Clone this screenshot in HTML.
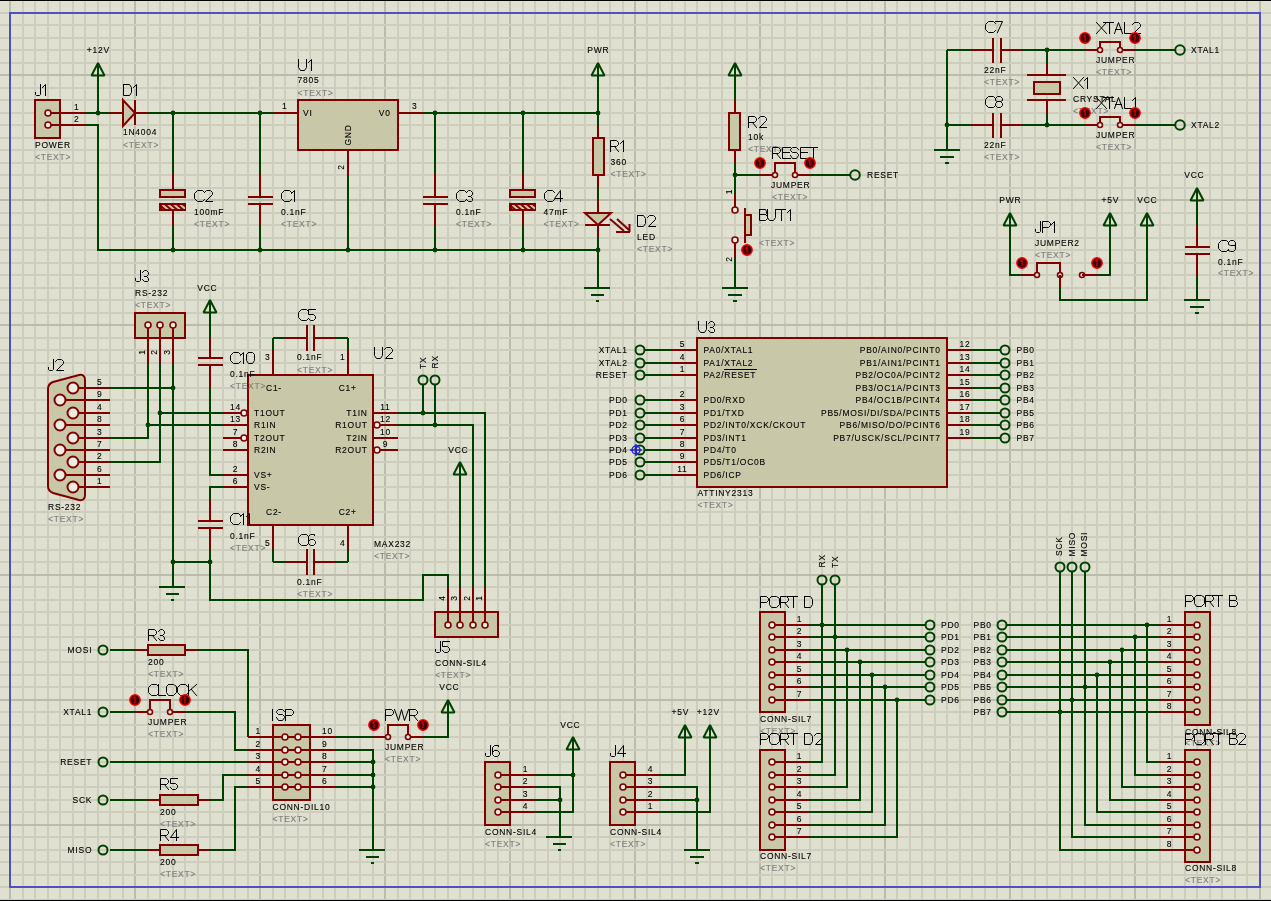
<!DOCTYPE html>
<html><head><meta charset="utf-8"><style>
html,body{margin:0;padding:0;background:#E0E0D0;overflow:hidden}
svg{display:block;will-change:transform}
.w{fill:none;stroke:#004000;stroke-width:2;stroke-linecap:butt;stroke-linejoin:miter;shape-rendering:crispEdges}
.r{fill:none;stroke:#800000;stroke-width:2;stroke-linecap:butt;stroke-linejoin:miter;shape-rendering:crispEdges}
.b{stroke:#800000;stroke-width:2;shape-rendering:crispEdges}
.j{fill:#004000}
.pw{fill:none;stroke:#004000;stroke-width:2;stroke-linejoin:bevel}
.t{fill:none;stroke:#004000;stroke-width:2}
.pc{fill:#ECECE2;stroke:#800000;stroke-width:1.6}
.ed{fill:#380000;stroke:#ff0000;stroke-width:1.4}
.edm{fill:none;stroke:#e00000;stroke-width:1.2}
text{font-family:"Liberation Sans",sans-serif}
.s,.g,.pn{letter-spacing:0.85px}
.big{font-size:16px;fill:#000}
.s{font-size:9.6px;fill:#000;stroke:#000;stroke-width:0.12}
.g{font-size:9.6px;fill:#808080;stroke:#808080;stroke-width:0.15}
.pn{font-size:9.6px;fill:#000;stroke:#000;stroke-width:0.12}
</style></head>
<body><svg width="1271" height="901" viewBox="0 0 1271 901">
<rect x="0" y="0" width="1271" height="901" fill="#E0E0D0"/>
<g stroke-width="1"><rect x="9" y="0" width="2" height="901" fill="#BCBCAD"/>
<rect x="22" y="0" width="2" height="901" fill="#CDCDBE"/>
<rect x="34" y="0" width="2" height="901" fill="#CDCDBE"/>
<rect x="47" y="0" width="2" height="901" fill="#CDCDBE"/>
<rect x="59" y="0" width="2" height="901" fill="#CDCDBE"/>
<rect x="72" y="0" width="2" height="901" fill="#CDCDBE"/>
<rect x="84" y="0" width="2" height="901" fill="#CDCDBE"/>
<rect x="97" y="0" width="2" height="901" fill="#CDCDBE"/>
<rect x="109" y="0" width="2" height="901" fill="#CDCDBE"/>
<rect x="122" y="0" width="2" height="901" fill="#CDCDBE"/>
<rect x="134" y="0" width="2" height="901" fill="#BCBCAD"/>
<rect x="147" y="0" width="2" height="901" fill="#CDCDBE"/>
<rect x="159" y="0" width="2" height="901" fill="#CDCDBE"/>
<rect x="172" y="0" width="2" height="901" fill="#CDCDBE"/>
<rect x="184" y="0" width="2" height="901" fill="#CDCDBE"/>
<rect x="197" y="0" width="2" height="901" fill="#CDCDBE"/>
<rect x="209" y="0" width="2" height="901" fill="#CDCDBE"/>
<rect x="222" y="0" width="2" height="901" fill="#CDCDBE"/>
<rect x="234" y="0" width="2" height="901" fill="#CDCDBE"/>
<rect x="247" y="0" width="2" height="901" fill="#CDCDBE"/>
<rect x="259" y="0" width="2" height="901" fill="#BCBCAD"/>
<rect x="272" y="0" width="2" height="901" fill="#CDCDBE"/>
<rect x="284" y="0" width="2" height="901" fill="#CDCDBE"/>
<rect x="297" y="0" width="2" height="901" fill="#CDCDBE"/>
<rect x="309" y="0" width="2" height="901" fill="#CDCDBE"/>
<rect x="322" y="0" width="2" height="901" fill="#CDCDBE"/>
<rect x="334" y="0" width="2" height="901" fill="#CDCDBE"/>
<rect x="347" y="0" width="2" height="901" fill="#CDCDBE"/>
<rect x="359" y="0" width="2" height="901" fill="#CDCDBE"/>
<rect x="372" y="0" width="2" height="901" fill="#CDCDBE"/>
<rect x="384" y="0" width="2" height="901" fill="#BCBCAD"/>
<rect x="397" y="0" width="2" height="901" fill="#CDCDBE"/>
<rect x="409" y="0" width="2" height="901" fill="#CDCDBE"/>
<rect x="422" y="0" width="2" height="901" fill="#CDCDBE"/>
<rect x="434" y="0" width="2" height="901" fill="#CDCDBE"/>
<rect x="447" y="0" width="2" height="901" fill="#CDCDBE"/>
<rect x="459" y="0" width="2" height="901" fill="#CDCDBE"/>
<rect x="472" y="0" width="2" height="901" fill="#CDCDBE"/>
<rect x="484" y="0" width="2" height="901" fill="#CDCDBE"/>
<rect x="497" y="0" width="2" height="901" fill="#CDCDBE"/>
<rect x="509" y="0" width="2" height="901" fill="#BCBCAD"/>
<rect x="522" y="0" width="2" height="901" fill="#CDCDBE"/>
<rect x="534" y="0" width="2" height="901" fill="#CDCDBE"/>
<rect x="547" y="0" width="2" height="901" fill="#CDCDBE"/>
<rect x="559" y="0" width="2" height="901" fill="#CDCDBE"/>
<rect x="572" y="0" width="2" height="901" fill="#CDCDBE"/>
<rect x="584" y="0" width="2" height="901" fill="#CDCDBE"/>
<rect x="597" y="0" width="2" height="901" fill="#CDCDBE"/>
<rect x="609" y="0" width="2" height="901" fill="#CDCDBE"/>
<rect x="622" y="0" width="2" height="901" fill="#CDCDBE"/>
<rect x="634" y="0" width="2" height="901" fill="#BCBCAD"/>
<rect x="646" y="0" width="2" height="901" fill="#CDCDBE"/>
<rect x="659" y="0" width="2" height="901" fill="#CDCDBE"/>
<rect x="671" y="0" width="2" height="901" fill="#CDCDBE"/>
<rect x="684" y="0" width="2" height="901" fill="#CDCDBE"/>
<rect x="696" y="0" width="2" height="901" fill="#CDCDBE"/>
<rect x="709" y="0" width="2" height="901" fill="#CDCDBE"/>
<rect x="721" y="0" width="2" height="901" fill="#CDCDBE"/>
<rect x="734" y="0" width="2" height="901" fill="#CDCDBE"/>
<rect x="746" y="0" width="2" height="901" fill="#CDCDBE"/>
<rect x="759" y="0" width="2" height="901" fill="#BCBCAD"/>
<rect x="771" y="0" width="2" height="901" fill="#CDCDBE"/>
<rect x="784" y="0" width="2" height="901" fill="#CDCDBE"/>
<rect x="796" y="0" width="2" height="901" fill="#CDCDBE"/>
<rect x="809" y="0" width="2" height="901" fill="#CDCDBE"/>
<rect x="821" y="0" width="2" height="901" fill="#CDCDBE"/>
<rect x="834" y="0" width="2" height="901" fill="#CDCDBE"/>
<rect x="846" y="0" width="2" height="901" fill="#CDCDBE"/>
<rect x="859" y="0" width="2" height="901" fill="#CDCDBE"/>
<rect x="871" y="0" width="2" height="901" fill="#CDCDBE"/>
<rect x="884" y="0" width="2" height="901" fill="#BCBCAD"/>
<rect x="896" y="0" width="2" height="901" fill="#CDCDBE"/>
<rect x="909" y="0" width="2" height="901" fill="#CDCDBE"/>
<rect x="921" y="0" width="2" height="901" fill="#CDCDBE"/>
<rect x="934" y="0" width="2" height="901" fill="#CDCDBE"/>
<rect x="946" y="0" width="2" height="901" fill="#CDCDBE"/>
<rect x="959" y="0" width="2" height="901" fill="#CDCDBE"/>
<rect x="971" y="0" width="2" height="901" fill="#CDCDBE"/>
<rect x="984" y="0" width="2" height="901" fill="#CDCDBE"/>
<rect x="996" y="0" width="2" height="901" fill="#CDCDBE"/>
<rect x="1009" y="0" width="2" height="901" fill="#BCBCAD"/>
<rect x="1021" y="0" width="2" height="901" fill="#CDCDBE"/>
<rect x="1034" y="0" width="2" height="901" fill="#CDCDBE"/>
<rect x="1046" y="0" width="2" height="901" fill="#CDCDBE"/>
<rect x="1059" y="0" width="2" height="901" fill="#CDCDBE"/>
<rect x="1071" y="0" width="2" height="901" fill="#CDCDBE"/>
<rect x="1084" y="0" width="2" height="901" fill="#CDCDBE"/>
<rect x="1096" y="0" width="2" height="901" fill="#CDCDBE"/>
<rect x="1109" y="0" width="2" height="901" fill="#CDCDBE"/>
<rect x="1121" y="0" width="2" height="901" fill="#CDCDBE"/>
<rect x="1134" y="0" width="2" height="901" fill="#BCBCAD"/>
<rect x="1146" y="0" width="2" height="901" fill="#CDCDBE"/>
<rect x="1159" y="0" width="2" height="901" fill="#CDCDBE"/>
<rect x="1171" y="0" width="2" height="901" fill="#CDCDBE"/>
<rect x="1184" y="0" width="2" height="901" fill="#CDCDBE"/>
<rect x="1196" y="0" width="2" height="901" fill="#CDCDBE"/>
<rect x="1209" y="0" width="2" height="901" fill="#CDCDBE"/>
<rect x="1221" y="0" width="2" height="901" fill="#CDCDBE"/>
<rect x="1234" y="0" width="2" height="901" fill="#CDCDBE"/>
<rect x="1246" y="0" width="2" height="901" fill="#CDCDBE"/>
<rect x="1259" y="0" width="2" height="901" fill="#BCBCAD"/>
<rect x="0" y="-1" width="1271" height="2" fill="#CDCDBE"/>
<rect x="0" y="12" width="1271" height="2" fill="#CDCDBE"/>
<rect x="0" y="24" width="1271" height="2" fill="#CDCDBE"/>
<rect x="0" y="37" width="1271" height="2" fill="#CDCDBE"/>
<rect x="0" y="49" width="1271" height="2" fill="#CDCDBE"/>
<rect x="0" y="62" width="1271" height="2" fill="#CDCDBE"/>
<rect x="0" y="74" width="1271" height="2" fill="#BCBCAD"/>
<rect x="0" y="87" width="1271" height="2" fill="#CDCDBE"/>
<rect x="0" y="99" width="1271" height="2" fill="#CDCDBE"/>
<rect x="0" y="112" width="1271" height="2" fill="#CDCDBE"/>
<rect x="0" y="124" width="1271" height="2" fill="#CDCDBE"/>
<rect x="0" y="137" width="1271" height="2" fill="#CDCDBE"/>
<rect x="0" y="149" width="1271" height="2" fill="#CDCDBE"/>
<rect x="0" y="162" width="1271" height="2" fill="#CDCDBE"/>
<rect x="0" y="174" width="1271" height="2" fill="#CDCDBE"/>
<rect x="0" y="187" width="1271" height="2" fill="#CDCDBE"/>
<rect x="0" y="199" width="1271" height="2" fill="#BCBCAD"/>
<rect x="0" y="212" width="1271" height="2" fill="#CDCDBE"/>
<rect x="0" y="224" width="1271" height="2" fill="#CDCDBE"/>
<rect x="0" y="237" width="1271" height="2" fill="#CDCDBE"/>
<rect x="0" y="249" width="1271" height="2" fill="#CDCDBE"/>
<rect x="0" y="262" width="1271" height="2" fill="#CDCDBE"/>
<rect x="0" y="274" width="1271" height="2" fill="#CDCDBE"/>
<rect x="0" y="287" width="1271" height="2" fill="#CDCDBE"/>
<rect x="0" y="299" width="1271" height="2" fill="#CDCDBE"/>
<rect x="0" y="312" width="1271" height="2" fill="#CDCDBE"/>
<rect x="0" y="324" width="1271" height="2" fill="#BCBCAD"/>
<rect x="0" y="337" width="1271" height="2" fill="#CDCDBE"/>
<rect x="0" y="349" width="1271" height="2" fill="#CDCDBE"/>
<rect x="0" y="362" width="1271" height="2" fill="#CDCDBE"/>
<rect x="0" y="374" width="1271" height="2" fill="#CDCDBE"/>
<rect x="0" y="387" width="1271" height="2" fill="#CDCDBE"/>
<rect x="0" y="399" width="1271" height="2" fill="#CDCDBE"/>
<rect x="0" y="412" width="1271" height="2" fill="#CDCDBE"/>
<rect x="0" y="424" width="1271" height="2" fill="#CDCDBE"/>
<rect x="0" y="437" width="1271" height="2" fill="#CDCDBE"/>
<rect x="0" y="449" width="1271" height="2" fill="#BCBCAD"/>
<rect x="0" y="461" width="1271" height="2" fill="#CDCDBE"/>
<rect x="0" y="474" width="1271" height="2" fill="#CDCDBE"/>
<rect x="0" y="486" width="1271" height="2" fill="#CDCDBE"/>
<rect x="0" y="499" width="1271" height="2" fill="#CDCDBE"/>
<rect x="0" y="511" width="1271" height="2" fill="#CDCDBE"/>
<rect x="0" y="524" width="1271" height="2" fill="#CDCDBE"/>
<rect x="0" y="536" width="1271" height="2" fill="#CDCDBE"/>
<rect x="0" y="549" width="1271" height="2" fill="#CDCDBE"/>
<rect x="0" y="561" width="1271" height="2" fill="#CDCDBE"/>
<rect x="0" y="574" width="1271" height="2" fill="#BCBCAD"/>
<rect x="0" y="586" width="1271" height="2" fill="#CDCDBE"/>
<rect x="0" y="599" width="1271" height="2" fill="#CDCDBE"/>
<rect x="0" y="611" width="1271" height="2" fill="#CDCDBE"/>
<rect x="0" y="624" width="1271" height="2" fill="#CDCDBE"/>
<rect x="0" y="636" width="1271" height="2" fill="#CDCDBE"/>
<rect x="0" y="649" width="1271" height="2" fill="#CDCDBE"/>
<rect x="0" y="661" width="1271" height="2" fill="#CDCDBE"/>
<rect x="0" y="674" width="1271" height="2" fill="#CDCDBE"/>
<rect x="0" y="686" width="1271" height="2" fill="#CDCDBE"/>
<rect x="0" y="699" width="1271" height="2" fill="#BCBCAD"/>
<rect x="0" y="711" width="1271" height="2" fill="#CDCDBE"/>
<rect x="0" y="724" width="1271" height="2" fill="#CDCDBE"/>
<rect x="0" y="736" width="1271" height="2" fill="#CDCDBE"/>
<rect x="0" y="749" width="1271" height="2" fill="#CDCDBE"/>
<rect x="0" y="761" width="1271" height="2" fill="#CDCDBE"/>
<rect x="0" y="774" width="1271" height="2" fill="#CDCDBE"/>
<rect x="0" y="786" width="1271" height="2" fill="#CDCDBE"/>
<rect x="0" y="799" width="1271" height="2" fill="#CDCDBE"/>
<rect x="0" y="811" width="1271" height="2" fill="#CDCDBE"/>
<rect x="0" y="824" width="1271" height="2" fill="#BCBCAD"/>
<rect x="0" y="836" width="1271" height="2" fill="#CDCDBE"/>
<rect x="0" y="849" width="1271" height="2" fill="#CDCDBE"/>
<rect x="0" y="861" width="1271" height="2" fill="#CDCDBE"/>
<rect x="0" y="874" width="1271" height="2" fill="#CDCDBE"/>
<rect x="0" y="886" width="1271" height="2" fill="#CDCDBE"/>
<rect x="0" y="899" width="1271" height="2" fill="#CDCDBE"/></g>
<rect x="0" y="0" width="1271" height="1" fill="#000"/>
<rect x="0" y="900" width="1271" height="1" fill="#000"/>
<rect x="10" y="13" width="1250" height="874" fill="none" stroke="#5050C4" stroke-width="2" shape-rendering="crispEdges"/>
<rect x="35" y="100" width="25" height="38" class="b" fill="#C8C8A8"/>
<polyline points="48,113 85,113" class="r"/>
<polyline points="48,125 85,125" class="r"/>
<circle cx="48" cy="113" r="3" class="pc"/>
<circle cx="48" cy="125" r="3" class="pc"/>
<polygon points="98,63 91.5,75.5 104.5,75.5" class="pw"/>
<line x1="98" y1="63" x2="98" y2="76" class="w"/>
<polyline points="85,113 110,113" class="w"/>
<circle cx="98" cy="113" r="2.4" class="j"/>
<polyline points="85,125 98,125 98,250 598,250 598,288" class="w"/>
<path d="M584,288H610M591,295H604M596,301H599" class="w"/>
<polyline points="110,113 123,113" class="r"/>
<polyline points="135,113 148,113" class="r"/>
<polygon points="123,100 123,126 135,113" class="b" fill="#C8C8A8" style="shape-rendering:auto"/>
<polyline points="135,100 135,125" class="r"/>
<polyline points="148,113 273,113" class="w"/>
<circle cx="173" cy="113" r="2.4" class="j"/>
<circle cx="260" cy="113" r="2.4" class="j"/>
<polyline points="173,113 173,174" class="w"/>
<polyline points="173,174 173,190" class="r"/>
<rect x="160" y="190" width="25" height="7" class="b" fill="#C8C8A8"/>
<rect x="159" y="203" width="27" height="8" fill="#800000"/>
<clipPath id="hc173"><rect x="162" y="205" width="23" height="4"/></clipPath>
<path clip-path="url(#hc173)" d="M156,204.5 l6,5 M162,204.5 l6,5 M168,204.5 l6,5 M174,204.5 l6,5 M180,204.5 l6,5 M186,204.5 l6,5 " stroke="#C8C8A8" stroke-width="2"/>
<polyline points="173,211 173,225" class="r"/>
<polyline points="173,225 173,250" class="w"/>
<circle cx="173" cy="250" r="2.4" class="j"/>
<polyline points="260,113 260,174" class="w"/>
<polyline points="260,174 260,197" class="r"/>
<polyline points="248,197 273,197" class="r"/>
<polyline points="248,204 273,204" class="r"/>
<polyline points="260,204 260,225" class="r"/>
<polyline points="260,225 260,250" class="w"/>
<circle cx="260" cy="250" r="2.4" class="j"/>
<polyline points="273,113 298,113" class="r"/>
<polyline points="398,113 423,113" class="r"/>
<polyline points="348,150 348,175" class="r"/>
<rect x="298" y="100" width="100" height="50" class="b" fill="#C8C8A8"/>
<polyline points="348,175 348,250" class="w"/>
<circle cx="348" cy="250" r="2.4" class="j"/>
<polyline points="423,113 598,113" class="w"/>
<circle cx="435" cy="113" r="2.4" class="j"/>
<circle cx="523" cy="113" r="2.4" class="j"/>
<circle cx="598" cy="113" r="2.4" class="j"/>
<polyline points="435,113 435,174" class="w"/>
<polyline points="435,174 435,197" class="r"/>
<polyline points="423,197 448,197" class="r"/>
<polyline points="423,204 448,204" class="r"/>
<polyline points="435,204 435,225" class="r"/>
<polyline points="435,225 435,250" class="w"/>
<circle cx="435" cy="250" r="2.4" class="j"/>
<polyline points="523,113 523,174" class="w"/>
<polyline points="523,174 523,190" class="r"/>
<rect x="510" y="190" width="25" height="7" class="b" fill="#C8C8A8"/>
<rect x="509" y="203" width="27" height="8" fill="#800000"/>
<clipPath id="hc523"><rect x="512" y="205" width="23" height="4"/></clipPath>
<path clip-path="url(#hc523)" d="M506,204.5 l6,5 M512,204.5 l6,5 M518,204.5 l6,5 M524,204.5 l6,5 M530,204.5 l6,5 M536,204.5 l6,5 " stroke="#C8C8A8" stroke-width="2"/>
<polyline points="523,211 523,225" class="r"/>
<polyline points="523,225 523,250" class="w"/>
<circle cx="523" cy="250" r="2.4" class="j"/>
<polygon points="598,63 591.5,75.5 604.5,75.5" class="pw"/>
<line x1="598" y1="63" x2="598" y2="76" class="w"/>
<polyline points="598,75 598,125" class="w"/>
<polyline points="598,125 598,138" class="r"/>
<rect x="593" y="138" width="11" height="37" class="b" fill="#C8C8A8"/>
<polyline points="598,175 598,188" class="r"/>
<polyline points="598,188 598,200" class="w"/>
<polyline points="598,200 598,213" class="r"/>
<polyline points="598,224 598,238" class="r"/>
<polygon points="585,213 611,213 598,225" class="b" fill="#C8C8A8" style="shape-rendering:auto"/>
<polyline points="585,225 610,225" class="r"/>
<path d="M610,219 L624,231 M617,219 L629,230 M616,232 H630 M629.5,232 V224" stroke="#800000" stroke-width="2" fill="none"/>
<polyline points="598,238 598,250" class="w"/>
<polyline points="98,75 98,113" class="w"/>
<polygon points="735,63 728.5,75.5 741.5,75.5" class="pw"/>
<line x1="735" y1="63" x2="735" y2="76" class="w"/>
<polyline points="735,75 735,100" class="w"/>
<polyline points="735,100 735,113" class="r"/>
<rect x="729" y="113" width="11" height="37" class="b" fill="#C8C8A8"/>
<polyline points="735,150 735,163" class="r"/>
<polyline points="735,163 735,193" class="w"/>
<circle cx="735" cy="175" r="2.4" class="j"/>
<polyline points="735,193 735,210" class="r"/>
<polyline points="735,240 735,257" class="r"/>
<circle cx="735" cy="210" r="3" class="pc"/>
<circle cx="735" cy="240" r="3" class="pc"/>
<polyline points="745,208 745,243" class="r"/>
<rect x="745" y="215" width="6" height="20" class="b" fill="#C8C8A8"/>
<polyline points="735,257 735,288" class="w"/>
<path d="M722,288H748M728,295H742M733,301H737" class="w"/>
<polyline points="735,175 760,175" class="w"/>
<polyline points="760,175 775,175" class="r"/>
<polyline points="795,175 810,175" class="r"/>
<polyline points="810,175 850,175" class="w"/>
<polyline points="775,175 775,163 795,163 795,175" class="r"/>
<circle cx="775" cy="175" r="2.5" class="pc"/>
<circle cx="795" cy="175" r="2.5" class="pc"/>
<circle cx="855" cy="175" r="4.8" class="t"/>
<polyline points="947,50 947,150" class="w"/>
<path d="M934,150H960M940,157H954M945,163H949" class="w"/>
<circle cx="947" cy="125" r="2.4" class="j"/>
<polyline points="947,50 972,50" class="w"/>
<polyline points="972,50 993,50" class="r"/>
<polyline points="1001,50 1022,50" class="r"/>
<polyline points="993,38 993,63" class="r"/>
<polyline points="1001,38 1001,63" class="r"/>
<polyline points="1022,50 1085,50" class="w"/>
<polyline points="1085,50 1100,50" class="r"/>
<polyline points="1120,50 1135,50" class="r"/>
<polyline points="1135,50 1175,50" class="w"/>
<polyline points="1100,50 1100,42 1120,42 1120,50" class="r"/>
<circle cx="1100" cy="50" r="2.5" class="pc"/>
<circle cx="1120" cy="50" r="2.5" class="pc"/>
<circle cx="1180" cy="50" r="4.8" class="t"/>
<circle cx="1047" cy="50" r="2.4" class="j"/>
<polyline points="947,125 972,125" class="w"/>
<polyline points="972,125 993,125" class="r"/>
<polyline points="1001,125 1022,125" class="r"/>
<polyline points="993,113 993,138" class="r"/>
<polyline points="1001,113 1001,138" class="r"/>
<polyline points="1022,125 1085,125" class="w"/>
<polyline points="1085,125 1100,125" class="r"/>
<polyline points="1120,125 1135,125" class="r"/>
<polyline points="1135,125 1175,125" class="w"/>
<polyline points="1100,125 1100,117 1120,117 1120,125" class="r"/>
<circle cx="1100" cy="125" r="2.5" class="pc"/>
<circle cx="1120" cy="125" r="2.5" class="pc"/>
<circle cx="1180" cy="125" r="4.8" class="t"/>
<circle cx="1047" cy="125" r="2.4" class="j"/>
<polyline points="1047,50 1047,63" class="w"/>
<polyline points="1047,63 1047,75" class="r"/>
<polyline points="1027,75 1066,75" class="r"/>
<rect x="1034" y="82" width="26" height="12" class="b" fill="#C8C8A8"/>
<polyline points="1027,100 1066,100" class="r"/>
<polyline points="1047,100 1047,113" class="r"/>
<polyline points="1047,113 1047,125" class="w"/>
<polygon points="1010,213 1003.5,225.5 1016.5,225.5" class="pw"/>
<line x1="1010" y1="213" x2="1010" y2="226" class="w"/>
<polygon points="1110,213 1103.5,225.5 1116.5,225.5" class="pw"/>
<line x1="1110" y1="213" x2="1110" y2="226" class="w"/>
<polygon points="1147,213 1140.5,225.5 1153.5,225.5" class="pw"/>
<line x1="1147" y1="213" x2="1147" y2="226" class="w"/>
<polyline points="1010,225 1010,275 1022,275" class="w"/>
<polyline points="1022,275 1037,275" class="r"/>
<polyline points="1037,275 1037,263 1060,263 1060,275" class="r"/>
<circle cx="1037" cy="275" r="2.5" class="pc"/>
<circle cx="1060" cy="275" r="2.5" class="pc"/>
<polyline points="1060,275 1060,288" class="r"/>
<polyline points="1060,288 1060,300 1147,300 1147,225" class="w"/>
<circle cx="1082" cy="275" r="2.5" class="pc"/>
<polyline points="1082,275 1097,275" class="r"/>
<polyline points="1097,275 1110,275 1110,225" class="w"/>
<polygon points="1197,188 1190.5,200.5 1203.5,200.5" class="pw"/>
<line x1="1197" y1="188" x2="1197" y2="201" class="w"/>
<polyline points="1197,200 1197,225" class="w"/>
<polyline points="1197,225 1197,247" class="r"/>
<polyline points="1185,247 1210,247" class="r"/>
<polyline points="1185,254 1210,254" class="r"/>
<polyline points="1197,254 1197,275" class="r"/>
<polyline points="1197,275 1197,300" class="w"/>
<path d="M1184,300H1210M1190,307H1204M1195,313H1199" class="w"/>
<circle cx="598" cy="250" r="2.4" class="j"/>
<rect x="135" y="313" width="50" height="25" class="b" fill="#C8C8A8"/>
<polyline points="148,325 148,363" class="r"/>
<circle cx="148" cy="325" r="3" class="pc"/>
<polyline points="160,325 160,363" class="r"/>
<circle cx="160" cy="325" r="3" class="pc"/>
<polyline points="173,325 173,363" class="r"/>
<circle cx="173" cy="325" r="3" class="pc"/>
<polyline points="148,363 148,438 110,438" class="w"/>
<circle cx="148" cy="425" r="2.4" class="j"/>
<polyline points="160,363 160,462 110,462" class="w"/>
<circle cx="160" cy="413" r="2.4" class="j"/>
<polyline points="173,363 173,587" class="w"/>
<circle cx="173" cy="388" r="2.4" class="j"/>
<circle cx="173" cy="562" r="2.4" class="j"/>
<path d="M159,587H185M166,594H179M171,600H174" class="w"/>
<polyline points="110,388 173,388" class="w"/>
<polyline points="148,425 223,425" class="w"/>
<polyline points="160,413 223,413" class="w"/>
<polyline points="173,562 210,562" class="w"/>
<circle cx="210" cy="562" r="2.4" class="j"/>
<path d="M85,380 Q85,374 79,375 L53,382 Q48,384 48,389 L48,486 Q48,491 53,493 L79,500 Q85,501 85,495 Z" class="b" fill="#C8C8A8" style="shape-rendering:auto"/>
<polyline points="73,388 110,388" class="r"/>
<polyline points="60,400 110,400" class="r"/>
<polyline points="73,413 110,413" class="r"/>
<polyline points="60,425 110,425" class="r"/>
<polyline points="73,438 110,438" class="r"/>
<polyline points="60,450 110,450" class="r"/>
<polyline points="73,462 110,462" class="r"/>
<polyline points="60,475 110,475" class="r"/>
<polyline points="73,487 110,487" class="r"/>
<circle cx="73" cy="388" r="5.5" class="pc" style="stroke-width:2"/>
<circle cx="60" cy="400" r="5.5" class="pc" style="stroke-width:2"/>
<circle cx="73" cy="413" r="5.5" class="pc" style="stroke-width:2"/>
<circle cx="60" cy="425" r="5.5" class="pc" style="stroke-width:2"/>
<circle cx="73" cy="438" r="5.5" class="pc" style="stroke-width:2"/>
<circle cx="60" cy="450" r="5.5" class="pc" style="stroke-width:2"/>
<circle cx="73" cy="462" r="5.5" class="pc" style="stroke-width:2"/>
<circle cx="60" cy="475" r="5.5" class="pc" style="stroke-width:2"/>
<circle cx="73" cy="487" r="5.5" class="pc" style="stroke-width:2"/>
<polygon points="210,300 203.5,312.5 216.5,312.5" class="pw"/>
<line x1="210" y1="300" x2="210" y2="313" class="w"/>
<polyline points="210,313 210,338" class="w"/>
<polyline points="210,338 210,358" class="r"/>
<polyline points="198,358 223,358" class="r"/>
<polyline points="198,365 223,365" class="r"/>
<polyline points="210,365 210,388" class="r"/>
<polyline points="210,388 210,475 223,475" class="w"/>
<polyline points="223,487 210,487 210,500" class="w"/>
<polyline points="210,500 210,520" class="r"/>
<polyline points="198,521 223,521" class="r"/>
<polyline points="198,528 223,528" class="r"/>
<polyline points="210,527 210,550" class="r"/>
<polyline points="210,550 210,600 423,600 423,575 448,575 448,587" class="w"/>
<polyline points="223,413 248,413" class="r"/>
<polyline points="223,425 248,425" class="r"/>
<polyline points="223,438 248,438" class="r"/>
<polyline points="223,450 248,450" class="r"/>
<polyline points="223,475 248,475" class="r"/>
<polyline points="223,487 248,487" class="r"/>
<polyline points="373,413 398,413" class="r"/>
<polyline points="373,425 398,425" class="r"/>
<polyline points="373,438 398,438" class="r"/>
<polyline points="373,450 398,450" class="r"/>
<polyline points="273,350 273,375" class="r"/>
<polyline points="348,350 348,375" class="r"/>
<polyline points="273,525 273,550" class="r"/>
<polyline points="348,525 348,550" class="r"/>
<polyline points="273,338 273,350" class="w"/>
<polyline points="348,338 348,350" class="w"/>
<polyline points="273,550 273,562" class="w"/>
<polyline points="348,550 348,562" class="w"/>
<rect x="248" y="375" width="125" height="150" class="b" fill="#C8C8A8"/>
<circle cx="244" cy="413" r="3" class="pc"/>
<circle cx="244" cy="438" r="3" class="pc"/>
<circle cx="377" cy="425" r="3" class="pc"/>
<circle cx="377" cy="450" r="3" class="pc"/>
<polyline points="273,338 285,338" class="w"/>
<polyline points="285,338 307,338" class="r"/>
<polyline points="314,338 335,338" class="r"/>
<polyline points="335,338 348,338" class="w"/>
<polyline points="307,325 307,351" class="r"/>
<polyline points="314,325 314,351" class="r"/>
<polyline points="273,562 285,562" class="w"/>
<polyline points="285,562 307,562" class="r"/>
<polyline points="314,562 335,562" class="r"/>
<polyline points="335,562 348,562" class="w"/>
<polyline points="307,549 307,575" class="r"/>
<polyline points="314,549 314,575" class="r"/>
<circle cx="423" cy="380" r="4.5" class="t"/>
<circle cx="435" cy="380" r="4.5" class="t"/>
<polyline points="423,385 423,413" class="w"/>
<polyline points="435,385 435,425" class="w"/>
<polyline points="398,413 485,413 485,587" class="w"/>
<circle cx="423" cy="413" r="2.4" class="j"/>
<polyline points="398,425 473,425 473,587" class="w"/>
<circle cx="435" cy="425" r="2.4" class="j"/>
<polygon points="460,462 453.5,474.5 466.5,474.5" class="pw"/>
<line x1="460" y1="462" x2="460" y2="475" class="w"/>
<polyline points="460,475 460,587" class="w"/>
<rect x="435" y="612" width="63" height="25" class="b" fill="#C8C8A8"/>
<polyline points="448,587 448,625" class="r"/>
<polyline points="460,587 460,625" class="r"/>
<polyline points="473,587 473,625" class="r"/>
<polyline points="485,587 485,625" class="r"/>
<circle cx="448" cy="625" r="3" class="pc"/>
<circle cx="460" cy="625" r="3" class="pc"/>
<circle cx="473" cy="625" r="3" class="pc"/>
<circle cx="485" cy="625" r="3" class="pc"/>
<circle cx="103" cy="650" r="4.5" class="t"/>
<polyline points="110,650 135,650" class="w"/>
<polyline points="135,650 148,650" class="r"/>
<rect x="148" y="645" width="37" height="10" class="b" fill="#C8C8A8"/>
<polyline points="185,650 198,650" class="r"/>
<polyline points="198,650 248,650 248,737" class="w"/>
<circle cx="103" cy="712" r="4.5" class="t"/>
<polyline points="110,712 135,712" class="w"/>
<polyline points="135,712 150,712" class="r"/>
<polyline points="170,712 185,712" class="r"/>
<polyline points="150,712 150,700 170,700 170,712" class="r"/>
<circle cx="150" cy="712" r="2.5" class="pc"/>
<circle cx="170" cy="712" r="2.5" class="pc"/>
<polyline points="185,712 235,712 235,750 248,750" class="w"/>
<circle cx="103" cy="762" r="4.5" class="t"/>
<polyline points="110,762 248,762" class="w"/>
<circle cx="103" cy="800" r="4.5" class="t"/>
<polyline points="110,800 148,800" class="w"/>
<polyline points="148,800 160,800" class="r"/>
<rect x="160" y="795" width="38" height="10" class="b" fill="#C8C8A8"/>
<polyline points="198,800 210,800" class="r"/>
<polyline points="210,800 223,800 223,775 248,775" class="w"/>
<circle cx="103" cy="850" r="4.5" class="t"/>
<polyline points="110,850 148,850" class="w"/>
<polyline points="148,850 160,850" class="r"/>
<rect x="160" y="845" width="38" height="10" class="b" fill="#C8C8A8"/>
<polyline points="198,850 210,850" class="r"/>
<polyline points="210,850 235,850 235,787 248,787" class="w"/>
<rect x="273" y="725" width="37" height="75" class="b" fill="#C8C8A8"/>
<polyline points="248,737 335,737" class="r"/>
<polyline points="248,750 335,750" class="r"/>
<polyline points="248,762 335,762" class="r"/>
<polyline points="248,775 335,775" class="r"/>
<polyline points="248,787 335,787" class="r"/>
<circle cx="285" cy="737" r="3" class="pc"/>
<circle cx="298" cy="737" r="3" class="pc"/>
<circle cx="285" cy="750" r="3" class="pc"/>
<circle cx="298" cy="750" r="3" class="pc"/>
<circle cx="285" cy="762" r="3" class="pc"/>
<circle cx="298" cy="762" r="3" class="pc"/>
<circle cx="285" cy="775" r="3" class="pc"/>
<circle cx="298" cy="775" r="3" class="pc"/>
<circle cx="285" cy="787" r="3" class="pc"/>
<circle cx="298" cy="787" r="3" class="pc"/>
<polyline points="335,737 373,737" class="w"/>
<polyline points="373,737 388,737" class="r"/>
<polyline points="408,737 423,737" class="r"/>
<polyline points="388,737 388,725 408,725 408,737" class="r"/>
<circle cx="388" cy="737" r="2.5" class="pc"/>
<circle cx="408" cy="737" r="2.5" class="pc"/>
<polyline points="423,737 448,737 448,712" class="w"/>
<polygon points="448,700 441.5,712.5 454.5,712.5" class="pw"/>
<line x1="448" y1="700" x2="448" y2="713" class="w"/>
<polyline points="335,750 373,750 373,850" class="w"/>
<path d="M359,850H385M366,857H379M371,863H374" class="w"/>
<polyline points="335,762 373,762" class="w"/>
<circle cx="373" cy="762" r="2.4" class="j"/>
<polyline points="335,775 373,775" class="w"/>
<circle cx="373" cy="775" r="2.4" class="j"/>
<polyline points="335,787 373,787" class="w"/>
<circle cx="373" cy="787" r="2.4" class="j"/>
<rect x="485" y="762" width="25" height="63" class="b" fill="#C8C8A8"/>
<polyline points="498,775 535,775" class="r"/>
<polyline points="498,787 535,787" class="r"/>
<polyline points="498,800 535,800" class="r"/>
<polyline points="498,812 535,812" class="r"/>
<circle cx="498" cy="775" r="3" class="pc"/>
<circle cx="498" cy="787" r="3" class="pc"/>
<circle cx="498" cy="800" r="3" class="pc"/>
<circle cx="498" cy="812" r="3" class="pc"/>
<rect x="610" y="762" width="25" height="63" class="b" fill="#C8C8A8"/>
<polyline points="623,775 660,775" class="r"/>
<polyline points="623,787 660,787" class="r"/>
<polyline points="623,800 660,800" class="r"/>
<polyline points="623,812 660,812" class="r"/>
<circle cx="623" cy="775" r="3" class="pc"/>
<circle cx="623" cy="787" r="3" class="pc"/>
<circle cx="623" cy="800" r="3" class="pc"/>
<circle cx="623" cy="812" r="3" class="pc"/>
<polyline points="535,775 573,775 573,750" class="w"/>
<polyline points="535,812 573,812 573,775" class="w"/>
<circle cx="573" cy="775" r="2.4" class="j"/>
<polygon points="573,737 566.5,749.5 579.5,749.5" class="pw"/>
<line x1="573" y1="737" x2="573" y2="750" class="w"/>
<polyline points="535,787 560,787 560,837" class="w"/>
<polyline points="535,800 560,800" class="w"/>
<circle cx="560" cy="800" r="2.4" class="j"/>
<path d="M546,837H572M553,844H566M558,850H561" class="w"/>
<polyline points="660,775 685,775 685,737" class="w"/>
<polygon points="685,725 678.5,737.5 691.5,737.5" class="pw"/>
<line x1="685" y1="725" x2="685" y2="738" class="w"/>
<polyline points="660,787 697,787 697,850" class="w"/>
<path d="M684,850H710M690,857H704M695,863H699" class="w"/>
<polyline points="660,800 697,800" class="w"/>
<circle cx="697" cy="800" r="2.4" class="j"/>
<polyline points="660,812 710,812 710,737" class="w"/>
<polygon points="710,725 703.5,737.5 716.5,737.5" class="pw"/>
<line x1="710" y1="725" x2="710" y2="738" class="w"/>
<polyline points="645,350 672,350" class="w"/>
<polyline points="672,350 697,350" class="r"/>
<circle cx="640" cy="350" r="4.5" class="t"/>
<polyline points="645,363 672,363" class="w"/>
<polyline points="672,363 697,363" class="r"/>
<circle cx="640" cy="363" r="4.5" class="t"/>
<polyline points="645,375 672,375" class="w"/>
<polyline points="672,375 697,375" class="r"/>
<circle cx="640" cy="375" r="4.5" class="t"/>
<polyline points="645,400 672,400" class="w"/>
<polyline points="672,400 697,400" class="r"/>
<circle cx="640" cy="400" r="4.5" class="t"/>
<polyline points="645,413 672,413" class="w"/>
<polyline points="672,413 697,413" class="r"/>
<circle cx="640" cy="413" r="4.5" class="t"/>
<polyline points="645,425 672,425" class="w"/>
<polyline points="672,425 697,425" class="r"/>
<circle cx="640" cy="425" r="4.5" class="t"/>
<polyline points="645,438 672,438" class="w"/>
<polyline points="672,438 697,438" class="r"/>
<circle cx="640" cy="438" r="4.5" class="t"/>
<polyline points="645,450 672,450" class="w"/>
<polyline points="672,450 697,450" class="r"/>
<circle cx="640" cy="450" r="4.5" class="t"/>
<polyline points="645,462 672,462" class="w"/>
<polyline points="672,462 697,462" class="r"/>
<circle cx="640" cy="462" r="4.5" class="t"/>
<polyline points="645,475 672,475" class="w"/>
<polyline points="672,475 697,475" class="r"/>
<circle cx="640" cy="475" r="4.5" class="t"/>
<polyline points="947,350 972,350" class="r"/>
<polyline points="972,350 1000,350" class="w"/>
<circle cx="1005" cy="350" r="4.5" class="t"/>
<polyline points="947,363 972,363" class="r"/>
<polyline points="972,363 1000,363" class="w"/>
<circle cx="1005" cy="363" r="4.5" class="t"/>
<polyline points="947,375 972,375" class="r"/>
<polyline points="972,375 1000,375" class="w"/>
<circle cx="1005" cy="375" r="4.5" class="t"/>
<polyline points="947,388 972,388" class="r"/>
<polyline points="972,388 1000,388" class="w"/>
<circle cx="1005" cy="388" r="4.5" class="t"/>
<polyline points="947,400 972,400" class="r"/>
<polyline points="972,400 1000,400" class="w"/>
<circle cx="1005" cy="400" r="4.5" class="t"/>
<polyline points="947,413 972,413" class="r"/>
<polyline points="972,413 1000,413" class="w"/>
<circle cx="1005" cy="413" r="4.5" class="t"/>
<polyline points="947,425 972,425" class="r"/>
<polyline points="972,425 1000,425" class="w"/>
<circle cx="1005" cy="425" r="4.5" class="t"/>
<polyline points="947,438 972,438" class="r"/>
<polyline points="972,438 1000,438" class="w"/>
<circle cx="1005" cy="438" r="4.5" class="t"/>
<rect x="697" y="338" width="250" height="149" class="b" fill="#C8C8A8"/>
<line x1="724" y1="369.5" x2="757" y2="369.5" stroke="#000" stroke-width="1"/>
<g stroke="#2020E0" stroke-width="1.5" fill="none"><circle cx="636" cy="450" r="4"/><path d="M630,450H642M636,444V456"/></g>
<circle cx="822" cy="580" r="4.5" class="t"/>
<circle cx="835" cy="580" r="4.5" class="t"/>
<rect x="760" y="612" width="25" height="100" class="b" fill="#C8C8A8"/>
<rect x="760" y="750" width="25" height="100" class="b" fill="#C8C8A8"/>
<polyline points="772,625 810,625" class="r"/>
<polyline points="772,762 810,762" class="r"/>
<polyline points="810,625 925,625" class="w"/>
<circle cx="930" cy="625" r="4.5" class="t"/>
<polyline points="822,585 822,762 810,762" class="w"/>
<circle cx="822" cy="625" r="2.4" class="j"/>
<polyline points="772,637 810,637" class="r"/>
<polyline points="772,775 810,775" class="r"/>
<polyline points="810,637 925,637" class="w"/>
<circle cx="930" cy="637" r="4.5" class="t"/>
<polyline points="835,585 835,775 810,775" class="w"/>
<circle cx="835" cy="637" r="2.4" class="j"/>
<polyline points="772,650 810,650" class="r"/>
<polyline points="772,787 810,787" class="r"/>
<polyline points="810,650 925,650" class="w"/>
<circle cx="930" cy="650" r="4.5" class="t"/>
<polyline points="847,650 847,787 810,787" class="w"/>
<circle cx="847" cy="650" r="2.4" class="j"/>
<polyline points="772,662 810,662" class="r"/>
<polyline points="772,800 810,800" class="r"/>
<polyline points="810,662 925,662" class="w"/>
<circle cx="930" cy="662" r="4.5" class="t"/>
<polyline points="860,662 860,800 810,800" class="w"/>
<circle cx="860" cy="662" r="2.4" class="j"/>
<polyline points="772,675 810,675" class="r"/>
<polyline points="772,812 810,812" class="r"/>
<polyline points="810,675 925,675" class="w"/>
<circle cx="930" cy="675" r="4.5" class="t"/>
<polyline points="872,675 872,812 810,812" class="w"/>
<circle cx="872" cy="675" r="2.4" class="j"/>
<polyline points="772,687 810,687" class="r"/>
<polyline points="772,825 810,825" class="r"/>
<polyline points="810,687 925,687" class="w"/>
<circle cx="930" cy="687" r="4.5" class="t"/>
<polyline points="885,687 885,825 810,825" class="w"/>
<circle cx="885" cy="687" r="2.4" class="j"/>
<polyline points="772,700 810,700" class="r"/>
<polyline points="772,837 810,837" class="r"/>
<polyline points="810,700 925,700" class="w"/>
<circle cx="930" cy="700" r="4.5" class="t"/>
<polyline points="897,700 897,837 810,837" class="w"/>
<circle cx="897" cy="700" r="2.4" class="j"/>
<circle cx="772" cy="625" r="3" class="pc"/>
<circle cx="772" cy="762" r="3" class="pc"/>
<circle cx="772" cy="637" r="3" class="pc"/>
<circle cx="772" cy="775" r="3" class="pc"/>
<circle cx="772" cy="650" r="3" class="pc"/>
<circle cx="772" cy="787" r="3" class="pc"/>
<circle cx="772" cy="662" r="3" class="pc"/>
<circle cx="772" cy="800" r="3" class="pc"/>
<circle cx="772" cy="675" r="3" class="pc"/>
<circle cx="772" cy="812" r="3" class="pc"/>
<circle cx="772" cy="687" r="3" class="pc"/>
<circle cx="772" cy="825" r="3" class="pc"/>
<circle cx="772" cy="700" r="3" class="pc"/>
<circle cx="772" cy="837" r="3" class="pc"/>
<circle cx="1060" cy="567" r="4.5" class="t"/>
<circle cx="1072" cy="567" r="4.5" class="t"/>
<circle cx="1085" cy="567" r="4.5" class="t"/>
<rect x="1185" y="612" width="25" height="113" class="b" fill="#C8C8A8"/>
<rect x="1185" y="750" width="25" height="112" class="b" fill="#C8C8A8"/>
<polyline points="1160,625 1197,625" class="r"/>
<polyline points="1160,762 1197,762" class="r"/>
<polyline points="1007,625 1160,625" class="w"/>
<circle cx="1002" cy="625" r="4.5" class="t"/>
<polyline points="1147,625 1147,762 1160,762" class="w"/>
<circle cx="1147" cy="625" r="2.4" class="j"/>
<polyline points="1160,637 1197,637" class="r"/>
<polyline points="1160,775 1197,775" class="r"/>
<polyline points="1007,637 1160,637" class="w"/>
<circle cx="1002" cy="637" r="4.5" class="t"/>
<polyline points="1135,637 1135,775 1160,775" class="w"/>
<circle cx="1135" cy="637" r="2.4" class="j"/>
<polyline points="1160,650 1197,650" class="r"/>
<polyline points="1160,787 1197,787" class="r"/>
<polyline points="1007,650 1160,650" class="w"/>
<circle cx="1002" cy="650" r="4.5" class="t"/>
<polyline points="1122,650 1122,787 1160,787" class="w"/>
<circle cx="1122" cy="650" r="2.4" class="j"/>
<polyline points="1160,662 1197,662" class="r"/>
<polyline points="1160,800 1197,800" class="r"/>
<polyline points="1007,662 1160,662" class="w"/>
<circle cx="1002" cy="662" r="4.5" class="t"/>
<polyline points="1110,662 1110,800 1160,800" class="w"/>
<circle cx="1110" cy="662" r="2.4" class="j"/>
<polyline points="1160,675 1197,675" class="r"/>
<polyline points="1160,812 1197,812" class="r"/>
<polyline points="1007,675 1160,675" class="w"/>
<circle cx="1002" cy="675" r="4.5" class="t"/>
<polyline points="1097,675 1097,812 1160,812" class="w"/>
<circle cx="1097" cy="675" r="2.4" class="j"/>
<polyline points="1160,687 1197,687" class="r"/>
<polyline points="1160,825 1197,825" class="r"/>
<polyline points="1007,687 1160,687" class="w"/>
<circle cx="1002" cy="687" r="4.5" class="t"/>
<polyline points="1085,572 1085,825 1160,825" class="w"/>
<circle cx="1085" cy="687" r="2.4" class="j"/>
<polyline points="1160,700 1197,700" class="r"/>
<polyline points="1160,837 1197,837" class="r"/>
<polyline points="1007,700 1160,700" class="w"/>
<circle cx="1002" cy="700" r="4.5" class="t"/>
<polyline points="1072,572 1072,837 1160,837" class="w"/>
<circle cx="1072" cy="700" r="2.4" class="j"/>
<polyline points="1160,712 1197,712" class="r"/>
<polyline points="1160,850 1197,850" class="r"/>
<polyline points="1007,712 1160,712" class="w"/>
<circle cx="1002" cy="712" r="4.5" class="t"/>
<polyline points="1060,572 1060,850 1160,850" class="w"/>
<circle cx="1060" cy="712" r="2.4" class="j"/>
<circle cx="1197" cy="625" r="3" class="pc"/>
<circle cx="1197" cy="762" r="3" class="pc"/>
<circle cx="1197" cy="637" r="3" class="pc"/>
<circle cx="1197" cy="775" r="3" class="pc"/>
<circle cx="1197" cy="650" r="3" class="pc"/>
<circle cx="1197" cy="787" r="3" class="pc"/>
<circle cx="1197" cy="662" r="3" class="pc"/>
<circle cx="1197" cy="800" r="3" class="pc"/>
<circle cx="1197" cy="675" r="3" class="pc"/>
<circle cx="1197" cy="812" r="3" class="pc"/>
<circle cx="1197" cy="687" r="3" class="pc"/>
<circle cx="1197" cy="825" r="3" class="pc"/>
<circle cx="1197" cy="700" r="3" class="pc"/>
<circle cx="1197" cy="837" r="3" class="pc"/>
<circle cx="1197" cy="712" r="3" class="pc"/>
<circle cx="1197" cy="850" r="3" class="pc"/>
<text class="pn" transform="translate(74,109.5) scale(0.885,1)">1</text>
<text class="pn" transform="translate(74,121.5) scale(0.885,1)">2</text>
<text class="s" transform="translate(35,148) scale(0.885,1)">POWER</text>
<text class="g" transform="translate(35,159.5) scale(0.885,1)">&lt;TEXT&gt;</text>
<text class="s" text-anchor="middle" transform="translate(98.37,53) scale(0.885,1)">+12V</text>
<text class="s" transform="translate(123,135) scale(0.885,1)">1N4004</text>
<text class="g" transform="translate(123,148) scale(0.885,1)">&lt;TEXT&gt;</text>
<text class="s" transform="translate(194,215) scale(0.885,1)">100mF</text>
<text class="g" transform="translate(194,227) scale(0.885,1)">&lt;TEXT&gt;</text>
<text class="s" transform="translate(281,215) scale(0.885,1)">0.1nF</text>
<text class="g" transform="translate(281,227) scale(0.885,1)">&lt;TEXT&gt;</text>
<text class="s" transform="translate(303,116) scale(0.885,1)">VI</text>
<text class="s" text-anchor="end" transform="translate(390.75,116) scale(0.885,1)">V0</text>
<text class="s" text-anchor="middle" transform="translate(351.37,135) rotate(-90) scale(0.885,1)">GND</text>
<text class="pn" transform="translate(282,109) scale(0.885,1)">1</text>
<text class="pn" transform="translate(412,109) scale(0.885,1)">3</text>
<text class="pn" text-anchor="middle" transform="translate(344.37,167) rotate(-90) scale(0.885,1)">2</text>
<text class="s" transform="translate(297.5,83) scale(0.885,1)">7805</text>
<text class="g" transform="translate(297.5,96) scale(0.885,1)">&lt;TEXT&gt;</text>
<text class="s" transform="translate(456,215) scale(0.885,1)">0.1nF</text>
<text class="g" transform="translate(456,227) scale(0.885,1)">&lt;TEXT&gt;</text>
<text class="s" transform="translate(543.5,215) scale(0.885,1)">47mF</text>
<text class="g" transform="translate(543.5,227) scale(0.885,1)">&lt;TEXT&gt;</text>
<text class="s" text-anchor="middle" transform="translate(598.37,53) scale(0.885,1)">PWR</text>
<text class="s" transform="translate(610.5,164.5) scale(0.885,1)">360</text>
<text class="g" transform="translate(610.5,176.5) scale(0.885,1)">&lt;TEXT&gt;</text>
<text class="s" transform="translate(637,239.5) scale(0.885,1)">LED</text>
<text class="g" transform="translate(637,251.5) scale(0.885,1)">&lt;TEXT&gt;</text>
<text class="s" transform="translate(748,140) scale(0.885,1)">10k</text>
<text class="g" transform="translate(748,152) scale(0.885,1)">&lt;TEXT&gt;</text>
<text class="pn" text-anchor="middle" transform="translate(732.37,191.5) rotate(-90) scale(0.885,1)">1</text>
<text class="pn" text-anchor="middle" transform="translate(732.37,259) rotate(-90) scale(0.885,1)">2</text>
<text class="g" transform="translate(759,246) scale(0.885,1)">&lt;TEXT&gt;</text>
<text class="s" transform="translate(867,178) scale(0.885,1)">RESET</text>
<text class="s" transform="translate(771,188) scale(0.885,1)">JUMPER</text>
<text class="g" transform="translate(772,199.5) scale(0.885,1)">&lt;TEXT&gt;</text>
<text class="s" transform="translate(1191,53) scale(0.885,1)">XTAL1</text>
<text class="s" transform="translate(984,72.6) scale(0.885,1)">22nF</text>
<text class="g" transform="translate(984,84.6) scale(0.885,1)">&lt;TEXT&gt;</text>
<text class="s" transform="translate(1096,62.8) scale(0.885,1)">JUMPER</text>
<text class="g" transform="translate(1096,74.6) scale(0.885,1)">&lt;TEXT&gt;</text>
<text class="s" transform="translate(1191,128) scale(0.885,1)">XTAL2</text>
<text class="s" transform="translate(984,147.5) scale(0.885,1)">22nF</text>
<text class="g" transform="translate(984,159.5) scale(0.885,1)">&lt;TEXT&gt;</text>
<text class="s" transform="translate(1096,138.0) scale(0.885,1)">JUMPER</text>
<text class="g" transform="translate(1096,149.8) scale(0.885,1)">&lt;TEXT&gt;</text>
<text class="s" transform="translate(1073,102) scale(0.885,1)">CRYSTAL</text>
<text class="g" transform="translate(1073,114) scale(0.885,1)">&lt;TEXT&gt;</text>
<text class="s" text-anchor="middle" transform="translate(1010.37,203) scale(0.885,1)">PWR</text>
<text class="s" text-anchor="middle" transform="translate(1110.37,203) scale(0.885,1)">+5V</text>
<text class="s" text-anchor="middle" transform="translate(1147.37,203) scale(0.885,1)">VCC</text>
<text class="s" transform="translate(1035,246) scale(0.885,1)">JUMPER2</text>
<text class="g" transform="translate(1035,258) scale(0.885,1)">&lt;TEXT&gt;</text>
<text class="s" text-anchor="middle" transform="translate(1194.37,178) scale(0.885,1)">VCC</text>
<text class="s" transform="translate(1218,264.7) scale(0.885,1)">0.1nF</text>
<text class="g" transform="translate(1218,276) scale(0.885,1)">&lt;TEXT&gt;</text>
<text class="pn" text-anchor="middle" transform="translate(144.87,352) rotate(-90) scale(0.885,1)">1</text>
<text class="pn" text-anchor="middle" transform="translate(157.37,352) rotate(-90) scale(0.885,1)">2</text>
<text class="pn" text-anchor="middle" transform="translate(169.87,352) rotate(-90) scale(0.885,1)">3</text>
<text class="s" transform="translate(135,296) scale(0.885,1)">RS-232</text>
<text class="g" transform="translate(135,308) scale(0.885,1)">&lt;TEXT&gt;</text>
<text class="pn" transform="translate(97,385) scale(0.885,1)">5</text>
<text class="pn" transform="translate(97,397) scale(0.885,1)">9</text>
<text class="pn" transform="translate(97,410) scale(0.885,1)">4</text>
<text class="pn" transform="translate(97,422) scale(0.885,1)">8</text>
<text class="pn" transform="translate(97,435) scale(0.885,1)">3</text>
<text class="pn" transform="translate(97,447) scale(0.885,1)">7</text>
<text class="pn" transform="translate(97,459) scale(0.885,1)">2</text>
<text class="pn" transform="translate(97,472) scale(0.885,1)">6</text>
<text class="pn" transform="translate(97,484) scale(0.885,1)">1</text>
<text class="s" transform="translate(48,509.7) scale(0.885,1)">RS-232</text>
<text class="g" transform="translate(48,521.6) scale(0.885,1)">&lt;TEXT&gt;</text>
<text class="s" text-anchor="middle" transform="translate(207.37,291) scale(0.885,1)">VCC</text>
<text class="s" transform="translate(230,376.5) scale(0.885,1)">0.1nF</text>
<text class="g" transform="translate(230,389) scale(0.885,1)">&lt;TEXT&gt;</text>
<text class="s" transform="translate(230,539) scale(0.885,1)">0.1nF</text>
<text class="g" transform="translate(230,551) scale(0.885,1)">&lt;TEXT&gt;</text>
<text class="pn" text-anchor="middle" transform="translate(235.37,410) scale(0.885,1)">14</text>
<text class="pn" text-anchor="middle" transform="translate(235.37,422) scale(0.885,1)">13</text>
<text class="pn" text-anchor="middle" transform="translate(235.37,435) scale(0.885,1)">7</text>
<text class="pn" text-anchor="middle" transform="translate(235.37,447) scale(0.885,1)">8</text>
<text class="pn" text-anchor="middle" transform="translate(235.37,472) scale(0.885,1)">2</text>
<text class="pn" text-anchor="middle" transform="translate(235.37,484) scale(0.885,1)">6</text>
<text class="pn" text-anchor="middle" transform="translate(385.37,410) scale(0.885,1)">11</text>
<text class="pn" text-anchor="middle" transform="translate(385.37,422) scale(0.885,1)">12</text>
<text class="pn" text-anchor="middle" transform="translate(385.37,435) scale(0.885,1)">10</text>
<text class="pn" text-anchor="middle" transform="translate(385.37,447) scale(0.885,1)">9</text>
<text class="pn" transform="translate(265,360) scale(0.885,1)">3</text>
<text class="pn" transform="translate(340,360) scale(0.885,1)">1</text>
<text class="pn" transform="translate(265,546) scale(0.885,1)">5</text>
<text class="pn" transform="translate(340,546) scale(0.885,1)">4</text>
<text class="s" transform="translate(266,391) scale(0.885,1)">C1-</text>
<text class="s" transform="translate(266,515) scale(0.885,1)">C2-</text>
<text class="s" text-anchor="end" transform="translate(356.75,391) scale(0.885,1)">C1+</text>
<text class="s" text-anchor="end" transform="translate(356.75,515) scale(0.885,1)">C2+</text>
<text class="s" transform="translate(254,416) scale(0.885,1)">T1OUT</text>
<text class="s" transform="translate(254,428) scale(0.885,1)">R1IN</text>
<text class="s" transform="translate(254,441) scale(0.885,1)">T2OUT</text>
<text class="s" transform="translate(254,453) scale(0.885,1)">R2IN</text>
<text class="s" transform="translate(254,478) scale(0.885,1)">VS+</text>
<text class="s" transform="translate(254,490) scale(0.885,1)">VS-</text>
<text class="s" text-anchor="end" transform="translate(367.75,416) scale(0.885,1)">T1IN</text>
<text class="s" text-anchor="end" transform="translate(367.75,428) scale(0.885,1)">R1OUT</text>
<text class="s" text-anchor="end" transform="translate(367.75,441) scale(0.885,1)">T2IN</text>
<text class="s" text-anchor="end" transform="translate(367.75,453) scale(0.885,1)">R2OUT</text>
<text class="s" transform="translate(374,547) scale(0.885,1)">MAX232</text>
<text class="g" transform="translate(374,558.5) scale(0.885,1)">&lt;TEXT&gt;</text>
<text class="s" transform="translate(297,360) scale(0.885,1)">0.1nF</text>
<text class="g" transform="translate(297,372.5) scale(0.885,1)">&lt;TEXT&gt;</text>
<text class="s" transform="translate(297,584.8) scale(0.885,1)">0.1nF</text>
<text class="g" transform="translate(297,596.5) scale(0.885,1)">&lt;TEXT&gt;</text>
<text class="s" transform="translate(425.5,369) rotate(-90) scale(0.885,1)">TX</text>
<text class="s" transform="translate(437.5,368.5) rotate(-90) scale(0.885,1)">RX</text>
<text class="s" text-anchor="middle" transform="translate(458.37,453) scale(0.885,1)">VCC</text>
<text class="pn" text-anchor="middle" transform="translate(444.87,598) rotate(-90) scale(0.885,1)">4</text>
<text class="pn" text-anchor="middle" transform="translate(457.37,598) rotate(-90) scale(0.885,1)">3</text>
<text class="pn" text-anchor="middle" transform="translate(469.87,598) rotate(-90) scale(0.885,1)">2</text>
<text class="pn" text-anchor="middle" transform="translate(482.37,598) rotate(-90) scale(0.885,1)">1</text>
<text class="s" transform="translate(435,666) scale(0.885,1)">CONN-SIL4</text>
<text class="g" transform="translate(435,678) scale(0.885,1)">&lt;TEXT&gt;</text>
<text class="s" text-anchor="end" transform="translate(92.25,653) scale(0.885,1)">MOSI</text>
<text class="s" transform="translate(148,664.6) scale(0.885,1)">200</text>
<text class="g" transform="translate(148,677) scale(0.885,1)">&lt;TEXT&gt;</text>
<text class="s" text-anchor="end" transform="translate(92.25,715) scale(0.885,1)">XTAL1</text>
<text class="s" transform="translate(148,724.9) scale(0.885,1)">JUMPER</text>
<text class="g" transform="translate(148,736.5) scale(0.885,1)">&lt;TEXT&gt;</text>
<text class="s" text-anchor="end" transform="translate(92.25,765) scale(0.885,1)">RESET</text>
<text class="s" text-anchor="end" transform="translate(92.25,803) scale(0.885,1)">SCK</text>
<text class="s" transform="translate(160,815) scale(0.885,1)">200</text>
<text class="g" transform="translate(160,826.5) scale(0.885,1)">&lt;TEXT&gt;</text>
<text class="s" text-anchor="end" transform="translate(92.25,853) scale(0.885,1)">MISO</text>
<text class="s" transform="translate(160,864.6) scale(0.885,1)">200</text>
<text class="g" transform="translate(160,876.5) scale(0.885,1)">&lt;TEXT&gt;</text>
<text class="pn" transform="translate(255.5,734) scale(0.885,1)">1</text>
<text class="pn" transform="translate(322,734) scale(0.885,1)">10</text>
<text class="pn" transform="translate(255.5,747) scale(0.885,1)">2</text>
<text class="pn" transform="translate(322,747) scale(0.885,1)">9</text>
<text class="pn" transform="translate(255.5,759) scale(0.885,1)">3</text>
<text class="pn" transform="translate(322,759) scale(0.885,1)">8</text>
<text class="pn" transform="translate(255.5,772) scale(0.885,1)">4</text>
<text class="pn" transform="translate(322,772) scale(0.885,1)">7</text>
<text class="pn" transform="translate(255.5,784) scale(0.885,1)">5</text>
<text class="pn" transform="translate(322,784) scale(0.885,1)">6</text>
<text class="s" transform="translate(272.5,809.5) scale(0.885,1)">CONN-DIL10</text>
<text class="g" transform="translate(272.5,821.5) scale(0.885,1)">&lt;TEXT&gt;</text>
<text class="s" text-anchor="middle" transform="translate(449.37,690) scale(0.885,1)">VCC</text>
<text class="s" transform="translate(385,749.7) scale(0.885,1)">JUMPER</text>
<text class="g" transform="translate(385,761.5) scale(0.885,1)">&lt;TEXT&gt;</text>
<text class="pn" text-anchor="middle" transform="translate(525.37,772) scale(0.885,1)">1</text>
<text class="pn" text-anchor="middle" transform="translate(525.37,784) scale(0.885,1)">2</text>
<text class="pn" text-anchor="middle" transform="translate(525.37,797) scale(0.885,1)">3</text>
<text class="pn" text-anchor="middle" transform="translate(525.37,809) scale(0.885,1)">4</text>
<text class="s" transform="translate(485,835) scale(0.885,1)">CONN-SIL4</text>
<text class="g" transform="translate(485,846.6) scale(0.885,1)">&lt;TEXT&gt;</text>
<text class="pn" text-anchor="middle" transform="translate(650.37,772) scale(0.885,1)">4</text>
<text class="pn" text-anchor="middle" transform="translate(650.37,784) scale(0.885,1)">3</text>
<text class="pn" text-anchor="middle" transform="translate(650.37,797) scale(0.885,1)">2</text>
<text class="pn" text-anchor="middle" transform="translate(650.37,809) scale(0.885,1)">1</text>
<text class="s" transform="translate(610,835) scale(0.885,1)">CONN-SIL4</text>
<text class="g" transform="translate(610,846.6) scale(0.885,1)">&lt;TEXT&gt;</text>
<text class="s" text-anchor="middle" transform="translate(570.37,728) scale(0.885,1)">VCC</text>
<text class="s" text-anchor="middle" transform="translate(680.37,715) scale(0.885,1)">+5V</text>
<text class="s" text-anchor="middle" transform="translate(708.37,715) scale(0.885,1)">+12V</text>
<text class="s" text-anchor="end" transform="translate(627.75,353) scale(0.885,1)">XTAL1</text>
<text class="pn" text-anchor="middle" transform="translate(682.37,347) scale(0.885,1)">5</text>
<text class="s" text-anchor="end" transform="translate(627.75,366) scale(0.885,1)">XTAL2</text>
<text class="pn" text-anchor="middle" transform="translate(682.37,360) scale(0.885,1)">4</text>
<text class="s" text-anchor="end" transform="translate(627.75,378) scale(0.885,1)">RESET</text>
<text class="pn" text-anchor="middle" transform="translate(682.37,372) scale(0.885,1)">1</text>
<text class="s" text-anchor="end" transform="translate(627.75,403) scale(0.885,1)">PD0</text>
<text class="pn" text-anchor="middle" transform="translate(682.37,397) scale(0.885,1)">2</text>
<text class="s" text-anchor="end" transform="translate(627.75,416) scale(0.885,1)">PD1</text>
<text class="pn" text-anchor="middle" transform="translate(682.37,410) scale(0.885,1)">3</text>
<text class="s" text-anchor="end" transform="translate(627.75,428) scale(0.885,1)">PD2</text>
<text class="pn" text-anchor="middle" transform="translate(682.37,422) scale(0.885,1)">6</text>
<text class="s" text-anchor="end" transform="translate(627.75,441) scale(0.885,1)">PD3</text>
<text class="pn" text-anchor="middle" transform="translate(682.37,435) scale(0.885,1)">7</text>
<text class="s" text-anchor="end" transform="translate(627.75,453) scale(0.885,1)">PD4</text>
<text class="pn" text-anchor="middle" transform="translate(682.37,447) scale(0.885,1)">8</text>
<text class="s" text-anchor="end" transform="translate(627.75,465) scale(0.885,1)">PD5</text>
<text class="pn" text-anchor="middle" transform="translate(682.37,459) scale(0.885,1)">9</text>
<text class="s" text-anchor="end" transform="translate(627.75,478) scale(0.885,1)">PD6</text>
<text class="pn" text-anchor="middle" transform="translate(682.37,472) scale(0.885,1)">11</text>
<text class="s" transform="translate(1016.5,353) scale(0.885,1)">PB0</text>
<text class="pn" text-anchor="middle" transform="translate(964.87,347) scale(0.885,1)">12</text>
<text class="s" transform="translate(1016.5,366) scale(0.885,1)">PB1</text>
<text class="pn" text-anchor="middle" transform="translate(964.87,360) scale(0.885,1)">13</text>
<text class="s" transform="translate(1016.5,378) scale(0.885,1)">PB2</text>
<text class="pn" text-anchor="middle" transform="translate(964.87,372) scale(0.885,1)">14</text>
<text class="s" transform="translate(1016.5,391) scale(0.885,1)">PB3</text>
<text class="pn" text-anchor="middle" transform="translate(964.87,385) scale(0.885,1)">15</text>
<text class="s" transform="translate(1016.5,403) scale(0.885,1)">PB4</text>
<text class="pn" text-anchor="middle" transform="translate(964.87,397) scale(0.885,1)">16</text>
<text class="s" transform="translate(1016.5,416) scale(0.885,1)">PB5</text>
<text class="pn" text-anchor="middle" transform="translate(964.87,410) scale(0.885,1)">17</text>
<text class="s" transform="translate(1016.5,428) scale(0.885,1)">PB6</text>
<text class="pn" text-anchor="middle" transform="translate(964.87,422) scale(0.885,1)">18</text>
<text class="s" transform="translate(1016.5,441) scale(0.885,1)">PB7</text>
<text class="pn" text-anchor="middle" transform="translate(964.87,435) scale(0.885,1)">19</text>
<text class="s" transform="translate(703.5,353) scale(0.885,1)">PA0/XTAL1</text>
<text class="s" transform="translate(703.5,366) scale(0.885,1)">PA1/XTAL2</text>
<text class="s" transform="translate(703.5,378) scale(0.885,1)">PA2/RESET</text>
<text class="s" transform="translate(703.5,403) scale(0.885,1)">PD0/RXD</text>
<text class="s" transform="translate(703.5,416) scale(0.885,1)">PD1/TXD</text>
<text class="s" transform="translate(703.5,428) scale(0.885,1)">PD2/INT0/XCK/CKOUT</text>
<text class="s" transform="translate(703.5,441) scale(0.885,1)">PD3/INT1</text>
<text class="s" transform="translate(703.5,453) scale(0.885,1)">PD4/T0</text>
<text class="s" transform="translate(703.5,465) scale(0.885,1)">PD5/T1/OC0B</text>
<text class="s" transform="translate(703.5,478) scale(0.885,1)">PD6/ICP</text>
<text class="s" text-anchor="end" transform="translate(940.75,353) scale(0.885,1)">PB0/AIN0/PCINT0</text>
<text class="s" text-anchor="end" transform="translate(940.75,366) scale(0.885,1)">PB1/AIN1/PCINT1</text>
<text class="s" text-anchor="end" transform="translate(940.75,378) scale(0.885,1)">PB2/OC0A/PCINT2</text>
<text class="s" text-anchor="end" transform="translate(940.75,391) scale(0.885,1)">PB3/OC1A/PCINT3</text>
<text class="s" text-anchor="end" transform="translate(940.75,403) scale(0.885,1)">PB4/OC1B/PCINT4</text>
<text class="s" text-anchor="end" transform="translate(940.75,416) scale(0.885,1)">PB5/MOSI/DI/SDA/PCINT5</text>
<text class="s" text-anchor="end" transform="translate(940.75,428) scale(0.885,1)">PB6/MISO/DO/PCINT6</text>
<text class="s" text-anchor="end" transform="translate(940.75,441) scale(0.885,1)">PB7/USCK/SCL/PCINT7</text>
<text class="s" transform="translate(697.5,496.4) scale(0.885,1)">ATTINY2313</text>
<text class="g" transform="translate(697.5,508) scale(0.885,1)">&lt;TEXT&gt;</text>
<text class="s" transform="translate(824.5,567.5) rotate(-90) scale(0.885,1)">RX</text>
<text class="s" transform="translate(837.5,568) rotate(-90) scale(0.885,1)">TX</text>
<text class="s" transform="translate(941,628) scale(0.885,1)">PD0</text>
<text class="pn" text-anchor="middle" transform="translate(799.37,622) scale(0.885,1)">1</text>
<text class="pn" text-anchor="middle" transform="translate(799.37,759) scale(0.885,1)">1</text>
<text class="s" transform="translate(941,640) scale(0.885,1)">PD1</text>
<text class="pn" text-anchor="middle" transform="translate(799.37,634) scale(0.885,1)">2</text>
<text class="pn" text-anchor="middle" transform="translate(799.37,772) scale(0.885,1)">2</text>
<text class="s" transform="translate(941,653) scale(0.885,1)">PD2</text>
<text class="pn" text-anchor="middle" transform="translate(799.37,647) scale(0.885,1)">3</text>
<text class="pn" text-anchor="middle" transform="translate(799.37,784) scale(0.885,1)">3</text>
<text class="s" transform="translate(941,665) scale(0.885,1)">PD3</text>
<text class="pn" text-anchor="middle" transform="translate(799.37,659) scale(0.885,1)">4</text>
<text class="pn" text-anchor="middle" transform="translate(799.37,797) scale(0.885,1)">4</text>
<text class="s" transform="translate(941,678) scale(0.885,1)">PD4</text>
<text class="pn" text-anchor="middle" transform="translate(799.37,672) scale(0.885,1)">5</text>
<text class="pn" text-anchor="middle" transform="translate(799.37,809) scale(0.885,1)">5</text>
<text class="s" transform="translate(941,690) scale(0.885,1)">PD5</text>
<text class="pn" text-anchor="middle" transform="translate(799.37,684) scale(0.885,1)">6</text>
<text class="pn" text-anchor="middle" transform="translate(799.37,822) scale(0.885,1)">6</text>
<text class="s" transform="translate(941,703) scale(0.885,1)">PD6</text>
<text class="pn" text-anchor="middle" transform="translate(799.37,697) scale(0.885,1)">7</text>
<text class="pn" text-anchor="middle" transform="translate(799.37,834) scale(0.885,1)">7</text>
<text class="s" transform="translate(760,722) scale(0.885,1)">CONN-SIL7</text>
<text class="g" transform="translate(760,734) scale(0.885,1)">&lt;TEXT&gt;</text>
<text class="s" transform="translate(760,859) scale(0.885,1)">CONN-SIL7</text>
<text class="g" transform="translate(760,870.5) scale(0.885,1)">&lt;TEXT&gt;</text>
<text class="s" transform="translate(1062,556) rotate(-90) scale(0.885,1)">SCK</text>
<text class="s" transform="translate(1074.5,556.5) rotate(-90) scale(0.885,1)">MISO</text>
<text class="s" transform="translate(1087,556.5) rotate(-90) scale(0.885,1)">MOSI</text>
<text class="s" transform="translate(973.5,628) scale(0.885,1)">PB0</text>
<text class="pn" text-anchor="middle" transform="translate(1169.37,622) scale(0.885,1)">1</text>
<text class="pn" text-anchor="middle" transform="translate(1169.37,759) scale(0.885,1)">1</text>
<text class="s" transform="translate(973.5,640) scale(0.885,1)">PB1</text>
<text class="pn" text-anchor="middle" transform="translate(1169.37,634) scale(0.885,1)">2</text>
<text class="pn" text-anchor="middle" transform="translate(1169.37,772) scale(0.885,1)">2</text>
<text class="s" transform="translate(973.5,653) scale(0.885,1)">PB2</text>
<text class="pn" text-anchor="middle" transform="translate(1169.37,647) scale(0.885,1)">3</text>
<text class="pn" text-anchor="middle" transform="translate(1169.37,784) scale(0.885,1)">3</text>
<text class="s" transform="translate(973.5,665) scale(0.885,1)">PB3</text>
<text class="pn" text-anchor="middle" transform="translate(1169.37,659) scale(0.885,1)">4</text>
<text class="pn" text-anchor="middle" transform="translate(1169.37,797) scale(0.885,1)">4</text>
<text class="s" transform="translate(973.5,678) scale(0.885,1)">PB4</text>
<text class="pn" text-anchor="middle" transform="translate(1169.37,672) scale(0.885,1)">5</text>
<text class="pn" text-anchor="middle" transform="translate(1169.37,809) scale(0.885,1)">5</text>
<text class="s" transform="translate(973.5,690) scale(0.885,1)">PB5</text>
<text class="pn" text-anchor="middle" transform="translate(1169.37,684) scale(0.885,1)">6</text>
<text class="pn" text-anchor="middle" transform="translate(1169.37,822) scale(0.885,1)">6</text>
<text class="s" transform="translate(973.5,703) scale(0.885,1)">PB6</text>
<text class="pn" text-anchor="middle" transform="translate(1169.37,697) scale(0.885,1)">7</text>
<text class="pn" text-anchor="middle" transform="translate(1169.37,834) scale(0.885,1)">7</text>
<text class="s" transform="translate(973.5,715) scale(0.885,1)">PB7</text>
<text class="pn" text-anchor="middle" transform="translate(1169.37,709) scale(0.885,1)">8</text>
<text class="pn" text-anchor="middle" transform="translate(1169.37,847) scale(0.885,1)">8</text>
<text class="s" transform="translate(1185,734.8) scale(0.885,1)">CONN-SIL8</text>
<text class="g" transform="translate(1185,746) scale(0.885,1)">&lt;TEXT&gt;</text>
<text class="s" transform="translate(1185,871) scale(0.885,1)">CONN-SIL8</text>
<text class="g" transform="translate(1185,883) scale(0.885,1)">&lt;TEXT&gt;</text>
<path d="M40.5,84.5 L40.5,94.5 L39.5,95.5 L36.5,95.5 L35.5,94.5 L35.5,92.5M42.5,87.5 L45.5,84.5 L45.5,95.5M123.5,84.5 L129.5,84.5 L131.5,87.5 L131.5,92.5 L129.5,95.5 L123.5,95.5 L123.5,84.5M133.5,87.5 L136.5,84.5 L136.5,95.5M204.5,192.5 L202.5,190.5 L197.5,190.5 L194.5,193.5 L194.5,198.5 L197.5,201.5 L202.5,201.5 L204.5,199.5M204.5,192.5 L206.5,190.5 L210.5,190.5 L212.5,192.5 L212.5,194.5 L205.5,201.5 L212.5,201.5M291.5,192.5 L289.5,190.5 L284.5,190.5 L281.5,193.5 L281.5,198.5 L284.5,201.5 L289.5,201.5 L291.5,199.5M291.5,193.5 L294.5,190.5 L294.5,201.5M298.5,59.5 L298.5,67.5 L300.5,70.5 L304.5,70.5 L306.5,67.5 L306.5,59.5M308.5,62.5 L311.5,59.5 L311.5,70.5M466.5,192.5 L464.5,190.5 L459.5,190.5 L456.5,193.5 L456.5,198.5 L459.5,201.5 L464.5,201.5 L466.5,199.5M466.5,192.5 L468.5,190.5 L470.5,190.5 L472.5,192.5 L472.5,194.5 L470.5,196.5 L468.5,196.5M470.5,196.5 L472.5,198.5 L472.5,200.5 L471.5,201.5 L468.5,201.5 L466.5,199.5M554.5,192.5 L552.5,190.5 L547.5,190.5 L544.5,193.5 L544.5,198.5 L547.5,201.5 L552.5,201.5 L554.5,199.5M560.5,201.5 L560.5,190.5 L554.5,198.5 L562.5,198.5M610.5,151.5 L610.5,140.5 L616.5,140.5 L618.5,142.5 L618.5,144.5 L616.5,146.5 L610.5,146.5M614.5,146.5 L618.5,151.5M620.5,143.5 L623.5,140.5 L623.5,151.5M637.5,215.5 L643.5,215.5 L645.5,218.5 L645.5,223.5 L643.5,226.5 L637.5,226.5 L637.5,215.5M647.5,217.5 L649.5,215.5 L653.5,215.5 L655.5,217.5 L655.5,219.5 L648.5,226.5 L655.5,226.5M748.5,127.5 L748.5,116.5 L754.5,116.5 L756.5,118.5 L756.5,120.5 L754.5,122.5 L748.5,122.5M752.5,122.5 L756.5,127.5M758.5,118.5 L760.5,116.5 L764.5,116.5 L766.5,118.5 L766.5,120.5 L759.5,127.5 L766.5,127.5M759.5,209.5 L765.5,209.5 L766.5,211.5 L766.5,213.5 L765.5,214.5 L759.5,214.5M765.5,214.5 L767.5,216.5 L767.5,218.5 L765.5,220.5 L759.5,220.5 L759.5,209.5M767.5,209.5 L767.5,217.5 L769.5,220.5 L773.5,220.5 L775.5,217.5 L775.5,209.5M775.5,209.5 L785.5,209.5M781.5,209.5 L781.5,220.5M787.5,212.5 L790.5,209.5 L790.5,220.5M772.5,158.5 L772.5,147.5 L778.5,147.5 L780.5,149.5 L780.5,151.5 L778.5,153.5 L772.5,153.5M776.5,153.5 L780.5,158.5M790.5,147.5 L782.5,147.5 L782.5,158.5 L790.5,158.5M782.5,152.5 L789.5,152.5M798.5,149.5 L796.5,147.5 L792.5,147.5 L790.5,149.5 L790.5,150.5 L792.5,152.5 L796.5,152.5 L798.5,154.5 L798.5,155.5 L796.5,158.5 L792.5,158.5 L790.5,155.5M808.5,147.5 L800.5,147.5 L800.5,158.5 L808.5,158.5M800.5,152.5 L807.5,152.5M807.5,147.5 L817.5,147.5M813.5,147.5 L813.5,158.5M995.5,23.5 L993.5,21.5 L988.5,21.5 L985.5,24.5 L985.5,29.5 L988.5,32.5 L993.5,32.5 L995.5,30.5M995.5,21.5 L1002.5,21.5 L997.5,32.5M1096.5,22.5 L1106.5,33.5M1106.5,22.5 L1096.5,33.5M1103.5,22.5 L1113.5,22.5M1109.5,22.5 L1109.5,33.5M1114.5,33.5 L1118.5,22.5 L1118.5,22.5 L1122.5,33.5M1115.5,29.5 L1121.5,29.5M1124.5,22.5 L1124.5,33.5 L1131.5,33.5M1132.5,24.5 L1134.5,22.5 L1138.5,22.5 L1140.5,24.5 L1140.5,26.5 L1133.5,33.5 L1140.5,33.5M995.5,98.5 L993.5,96.5 L988.5,96.5 L985.5,99.5 L985.5,104.5 L988.5,107.5 L993.5,107.5 L995.5,105.5M997.5,101.5 L995.5,100.5 L995.5,98.5 L997.5,96.5 L1000.5,96.5 L1002.5,98.5 L1002.5,100.5 L1000.5,101.5 L997.5,101.5 L995.5,103.5 L995.5,105.5 L997.5,107.5 L1000.5,107.5 L1002.5,105.5 L1002.5,103.5 L1000.5,101.5M1096.5,97.5 L1106.5,108.5M1106.5,97.5 L1096.5,108.5M1103.5,97.5 L1113.5,97.5M1109.5,97.5 L1109.5,108.5M1114.5,108.5 L1118.5,97.5 L1118.5,97.5 L1122.5,108.5M1115.5,104.5 L1121.5,104.5M1124.5,97.5 L1124.5,108.5 L1131.5,108.5M1132.5,100.5 L1135.5,97.5 L1135.5,108.5M1073.5,77.5 L1083.5,88.5M1083.5,77.5 L1073.5,88.5M1084.5,80.5 L1087.5,77.5 L1087.5,88.5M1040.5,221.5 L1040.5,231.5 L1039.5,232.5 L1036.5,232.5 L1035.5,231.5 L1035.5,229.5M1042.5,232.5 L1042.5,221.5 L1048.5,221.5 L1050.5,223.5 L1050.5,225.5 L1048.5,227.5 L1042.5,227.5M1051.5,224.5 L1054.5,221.5 L1054.5,232.5M1228.5,242.5 L1226.5,240.5 L1221.5,240.5 L1218.5,243.5 L1218.5,248.5 L1221.5,251.5 L1226.5,251.5 L1228.5,249.5M1235.5,245.5 L1230.5,245.5 L1228.5,244.5 L1228.5,242.5 L1230.5,240.5 L1233.5,240.5 L1235.5,242.5 L1235.5,249.5 L1233.5,251.5 L1230.5,251.5 L1228.5,250.5M140.5,270.5 L140.5,280.5 L139.5,281.5 L136.5,281.5 L135.5,280.5 L135.5,278.5M142.5,272.5 L144.5,270.5 L146.5,270.5 L148.5,272.5 L148.5,274.5 L146.5,276.5 L144.5,276.5M146.5,276.5 L148.5,278.5 L148.5,280.5 L147.5,281.5 L144.5,281.5 L142.5,279.5M53.5,359.5 L53.5,369.5 L52.5,370.5 L49.5,370.5 L48.5,369.5 L48.5,367.5M55.5,361.5 L57.5,359.5 L61.5,359.5 L63.5,361.5 L63.5,363.5 L56.5,370.5 L63.5,370.5M240.5,354.5 L238.5,352.5 L233.5,352.5 L230.5,355.5 L230.5,360.5 L233.5,363.5 L238.5,363.5 L240.5,361.5M240.5,355.5 L243.5,352.5 L243.5,363.5M248.5,352.5 L252.5,352.5 L254.5,354.5 L254.5,360.5 L252.5,363.5 L248.5,363.5 L246.5,360.5 L246.5,354.5 L248.5,352.5M240.5,515.5 L238.5,513.5 L233.5,513.5 L230.5,516.5 L230.5,521.5 L233.5,524.5 L238.5,524.5 L240.5,522.5M240.5,516.5 L243.5,513.5 L243.5,524.5M246.5,516.5 L249.5,513.5 L249.5,524.5M374.5,347.5 L374.5,355.5 L376.5,358.5 L380.5,358.5 L382.5,355.5 L382.5,347.5M384.5,349.5 L386.5,347.5 L390.5,347.5 L392.5,349.5 L392.5,351.5 L385.5,358.5 L392.5,358.5M308.5,311.5 L306.5,309.5 L301.5,309.5 L298.5,312.5 L298.5,317.5 L301.5,320.5 L306.5,320.5 L308.5,318.5M315.5,309.5 L308.5,309.5 L308.5,314.5 L313.5,314.5 L315.5,316.5 L315.5,318.5 L313.5,320.5 L310.5,320.5 L308.5,318.5M308.5,536.5 L306.5,534.5 L301.5,534.5 L298.5,537.5 L298.5,542.5 L301.5,545.5 L306.5,545.5 L308.5,543.5M314.5,535.5 L314.5,534.5 L310.5,534.5 L308.5,536.5 L308.5,543.5 L310.5,545.5 L313.5,545.5 L315.5,543.5 L315.5,541.5 L313.5,539.5 L310.5,539.5 L308.5,541.5M440.5,641.5 L440.5,651.5 L439.5,652.5 L436.5,652.5 L435.5,651.5 L435.5,649.5M449.5,641.5 L442.5,641.5 L442.5,646.5 L447.5,646.5 L449.5,648.5 L449.5,650.5 L447.5,652.5 L444.5,652.5 L442.5,650.5M148.5,640.5 L148.5,629.5 L154.5,629.5 L156.5,631.5 L156.5,633.5 L154.5,635.5 L148.5,635.5M152.5,635.5 L156.5,640.5M158.5,631.5 L160.5,629.5 L162.5,629.5 L164.5,631.5 L164.5,633.5 L162.5,635.5 L160.5,635.5M162.5,635.5 L164.5,637.5 L164.5,639.5 L163.5,640.5 L160.5,640.5 L158.5,638.5M158.5,686.5 L156.5,684.5 L151.5,684.5 L148.5,687.5 L148.5,692.5 L151.5,695.5 L156.5,695.5 L158.5,693.5M158.5,684.5 L158.5,695.5 L165.5,695.5M168.5,684.5 L173.5,684.5 L176.5,686.5 L176.5,692.5 L173.5,695.5 L168.5,695.5 L166.5,692.5 L166.5,686.5 L168.5,684.5M187.5,686.5 L185.5,684.5 L180.5,684.5 L177.5,687.5 L177.5,692.5 L180.5,695.5 L185.5,695.5 L187.5,693.5M188.5,684.5 L188.5,695.5M196.5,684.5 L188.5,691.5M191.5,689.5 L196.5,695.5M160.5,789.5 L160.5,778.5 L166.5,778.5 L168.5,780.5 L168.5,782.5 L166.5,784.5 L160.5,784.5M164.5,784.5 L168.5,789.5M177.5,778.5 L170.5,778.5 L170.5,783.5 L175.5,783.5 L177.5,785.5 L177.5,787.5 L175.5,789.5 L172.5,789.5 L170.5,787.5M160.5,840.5 L160.5,829.5 L166.5,829.5 L168.5,831.5 L168.5,833.5 L166.5,835.5 L160.5,835.5M164.5,835.5 L168.5,840.5M176.5,840.5 L176.5,829.5 L170.5,837.5 L178.5,837.5M272.5,709.5 L272.5,720.5M284.5,711.5 L282.5,709.5 L278.5,709.5 L276.5,711.5 L276.5,712.5 L278.5,714.5 L282.5,714.5 L284.5,716.5 L284.5,717.5 L282.5,720.5 L278.5,720.5 L276.5,717.5M285.5,720.5 L285.5,709.5 L291.5,709.5 L293.5,711.5 L293.5,713.5 L291.5,715.5 L285.5,715.5M385.5,720.5 L385.5,709.5 L391.5,709.5 L393.5,711.5 L393.5,713.5 L391.5,715.5 L385.5,715.5M394.5,709.5 L398.5,720.5 L401.5,709.5 L404.5,720.5 L408.5,709.5M409.5,720.5 L409.5,709.5 L415.5,709.5 L417.5,711.5 L417.5,713.5 L415.5,715.5 L409.5,715.5M413.5,715.5 L417.5,720.5M490.5,745.5 L490.5,755.5 L489.5,756.5 L486.5,756.5 L485.5,755.5 L485.5,753.5M498.5,746.5 L498.5,745.5 L494.5,745.5 L492.5,747.5 L492.5,754.5 L494.5,756.5 L497.5,756.5 L499.5,754.5 L499.5,752.5 L497.5,750.5 L494.5,750.5 L492.5,752.5M615.5,745.5 L615.5,755.5 L614.5,756.5 L611.5,756.5 L610.5,755.5 L610.5,753.5M623.5,756.5 L623.5,745.5 L617.5,753.5 L625.5,753.5M698.5,321.5 L698.5,329.5 L700.5,332.5 L704.5,332.5 L706.5,329.5 L706.5,321.5M708.5,323.5 L710.5,321.5 L712.5,321.5 L714.5,323.5 L714.5,325.5 L712.5,327.5 L710.5,327.5M712.5,327.5 L714.5,329.5 L714.5,331.5 L713.5,332.5 L710.5,332.5 L708.5,330.5M760.5,607.5 L760.5,596.5 L766.5,596.5 L768.5,598.5 L768.5,600.5 L766.5,602.5 L760.5,602.5M771.5,596.5 L776.5,596.5 L779.5,598.5 L779.5,604.5 L776.5,607.5 L771.5,607.5 L769.5,604.5 L769.5,598.5 L771.5,596.5M780.5,607.5 L780.5,596.5 L786.5,596.5 L788.5,598.5 L788.5,600.5 L786.5,602.5 L780.5,602.5M784.5,602.5 L788.5,607.5M787.5,596.5 L797.5,596.5M793.5,596.5 L793.5,607.5M804.5,596.5 L810.5,596.5 L812.5,599.5 L812.5,604.5 L810.5,607.5 L804.5,607.5 L804.5,596.5M760.5,744.5 L760.5,733.5 L766.5,733.5 L768.5,735.5 L768.5,737.5 L766.5,739.5 L760.5,739.5M771.5,733.5 L776.5,733.5 L779.5,735.5 L779.5,741.5 L776.5,744.5 L771.5,744.5 L769.5,741.5 L769.5,735.5 L771.5,733.5M780.5,744.5 L780.5,733.5 L786.5,733.5 L788.5,735.5 L788.5,737.5 L786.5,739.5 L780.5,739.5M784.5,739.5 L788.5,744.5M787.5,733.5 L797.5,733.5M793.5,733.5 L793.5,744.5M804.5,733.5 L810.5,733.5 L812.5,736.5 L812.5,741.5 L810.5,744.5 L804.5,744.5 L804.5,733.5M814.5,735.5 L816.5,733.5 L820.5,733.5 L822.5,735.5 L822.5,737.5 L815.5,744.5 L822.5,744.5M1185.5,606.5 L1185.5,595.5 L1191.5,595.5 L1193.5,597.5 L1193.5,599.5 L1191.5,601.5 L1185.5,601.5M1196.5,595.5 L1201.5,595.5 L1204.5,597.5 L1204.5,603.5 L1201.5,606.5 L1196.5,606.5 L1194.5,603.5 L1194.5,597.5 L1196.5,595.5M1205.5,606.5 L1205.5,595.5 L1211.5,595.5 L1213.5,597.5 L1213.5,599.5 L1211.5,601.5 L1205.5,601.5M1209.5,601.5 L1213.5,606.5M1212.5,595.5 L1222.5,595.5M1218.5,595.5 L1218.5,606.5M1229.5,595.5 L1235.5,595.5 L1236.5,597.5 L1236.5,599.5 L1235.5,600.5 L1229.5,600.5M1235.5,600.5 L1237.5,602.5 L1237.5,604.5 L1235.5,606.5 L1229.5,606.5 L1229.5,595.5M1185.5,744.5 L1185.5,733.5 L1191.5,733.5 L1193.5,735.5 L1193.5,737.5 L1191.5,739.5 L1185.5,739.5M1196.5,733.5 L1201.5,733.5 L1204.5,735.5 L1204.5,741.5 L1201.5,744.5 L1196.5,744.5 L1194.5,741.5 L1194.5,735.5 L1196.5,733.5M1205.5,744.5 L1205.5,733.5 L1211.5,733.5 L1213.5,735.5 L1213.5,737.5 L1211.5,739.5 L1205.5,739.5M1209.5,739.5 L1213.5,744.5M1212.5,733.5 L1222.5,733.5M1218.5,733.5 L1218.5,744.5M1229.5,733.5 L1235.5,733.5 L1236.5,735.5 L1236.5,737.5 L1235.5,738.5 L1229.5,738.5M1235.5,738.5 L1237.5,740.5 L1237.5,742.5 L1235.5,744.5 L1229.5,744.5 L1229.5,733.5M1237.5,735.5 L1239.5,733.5 L1243.5,733.5 L1245.5,735.5 L1245.5,737.5 L1238.5,744.5 L1245.5,744.5" fill="none" stroke="#000" stroke-width="1" stroke-linecap="square" stroke-linejoin="miter"/>
<circle cx="760" cy="163" r="5.2" class="ed"/>
<path d="M758.5,161.5L760,160V166" class="edm"/>
<circle cx="810" cy="163" r="5.2" class="ed"/>
<path d="M808.5,161.5L810,160V166" class="edm"/>
<circle cx="747" cy="250" r="5.2" class="ed"/>
<path d="M745.5,248.5L747,247V253" class="edm"/>
<circle cx="1085" cy="38" r="5.2" class="ed"/>
<path d="M1083.5,36.5L1085,35V41" class="edm"/>
<circle cx="1135" cy="38" r="5.2" class="ed"/>
<path d="M1133.5,36.5L1135,35V41" class="edm"/>
<circle cx="1085" cy="113" r="5.2" class="ed"/>
<path d="M1083.5,111.5L1085,110V116" class="edm"/>
<circle cx="1135" cy="113" r="5.2" class="ed"/>
<path d="M1133.5,111.5L1135,110V116" class="edm"/>
<circle cx="1022" cy="263" r="5.2" class="ed"/>
<path d="M1020.5,261.5L1022,260V266" class="edm"/>
<circle cx="1097" cy="263" r="5.2" class="ed"/>
<path d="M1095.5,261.5L1097,260V266" class="edm"/>
<circle cx="135" cy="700" r="5.2" class="ed"/>
<path d="M133.5,698.5L135,697V703" class="edm"/>
<circle cx="185" cy="700" r="5.2" class="ed"/>
<path d="M183.5,698.5L185,697V703" class="edm"/>
<circle cx="374" cy="725" r="5.2" class="ed"/>
<path d="M372.5,723.5L374,722V728" class="edm"/>
<circle cx="423" cy="725" r="5.2" class="ed"/>
<path d="M421.5,723.5L423,722V728" class="edm"/>
</svg></body></html>
